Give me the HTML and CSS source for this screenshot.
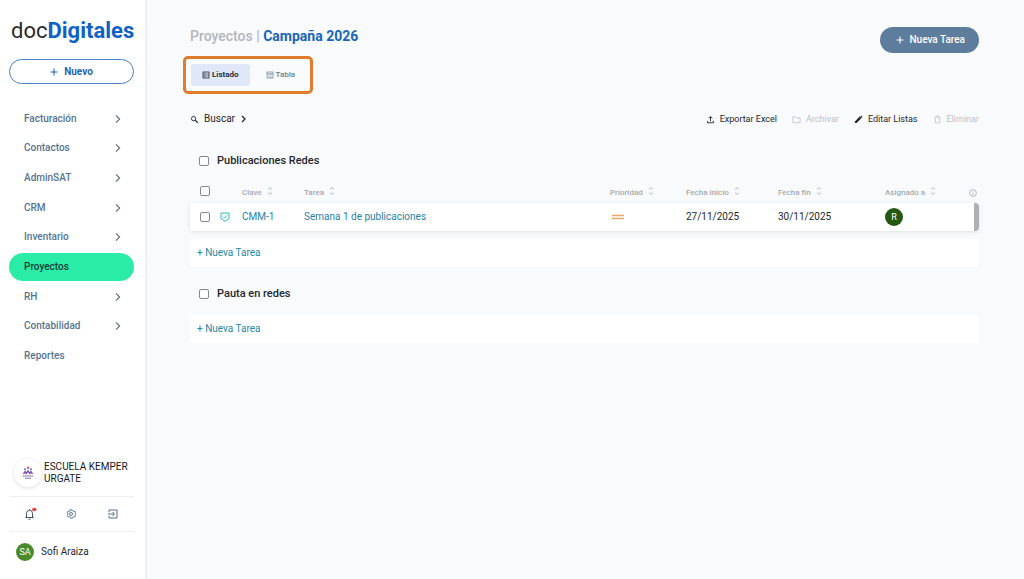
FILE: index.html
```html
<!DOCTYPE html>
<html lang="es">
<head>
<meta charset="utf-8">
<meta name="viewport" content="width=device-width, initial-scale=1">
<title>docDigitales – Proyectos</title>
<link rel="stylesheet" href="styles.css">
</head>
<body>
<svg class="defs" aria-hidden="true">
  <symbol id="chevron" viewBox="0 0 8 10"><path d="M2 1.4 5.6 5 2 8.6" fill="none" stroke="currentColor" stroke-width="1.1"/></symbol>
  <symbol id="plus" viewBox="0 0 8 8"><path d="M4 .5v7M.5 4h7" fill="none" stroke="currentColor" stroke-width="1.1"/></symbol>
  <symbol id="sort" viewBox="0 0 6 8"><path d="M1 2.300 3 .6l2 1.700M1 5.700l2 1.700 2-1.700" fill="none" stroke="currentColor" stroke-width=".8"/></symbol>
</svg>
<div class="app">
  <aside class="sidebar">
    <a class="logo" href="#"><span class="logo-doc">doc</span><span class="logo-main">Digitales</span></a>
    <button class="new-button" type="button"><svg class="icon-8"><use href="#plus"/></svg>Nuevo</button>
    <nav class="nav">
      <a class="nav-item" href="#">Facturación<svg class="nav-chevron"><use href="#chevron"/></svg></a>
      <a class="nav-item" href="#">Contactos<svg class="nav-chevron"><use href="#chevron"/></svg></a>
      <a class="nav-item" href="#">AdminSAT<svg class="nav-chevron"><use href="#chevron"/></svg></a>
      <a class="nav-item" href="#">CRM<svg class="nav-chevron"><use href="#chevron"/></svg></a>
      <a class="nav-item" href="#">Inventario<svg class="nav-chevron"><use href="#chevron"/></svg></a>
      <a class="nav-item nav-active" href="#" aria-current="page">Proyectos</a>
      <a class="nav-item" href="#">RH<svg class="nav-chevron"><use href="#chevron"/></svg></a>
      <a class="nav-item" href="#">Contabilidad<svg class="nav-chevron"><use href="#chevron"/></svg></a>
      <a class="nav-item" href="#">Reportes</a>
    </nav>
    <div class="account">
      <div class="company">
        <span class="company-logo">
          <svg width="12" height="14" viewBox="0 0 12 14" aria-hidden="true">
            <circle cx="6" cy="1.8" r="1.2" fill="#e0557c"/>
            <circle cx="3" cy="3.2" r="1" fill="#5b6fd0"/>
            <circle cx="9" cy="3.2" r="1" fill="#3f7fd0"/>
            <path d="M.8 7.800 3 4.500 4.600 6 6 3.400 7.400 6 9 4.500l2.200 3.300-2.200-.6-1.300 1.300L6 6.200 4.300 8.500 3 7.200z" fill="#6f55b4"/>
            <path d="M.8 7.800 3 5.500l-.4 2.600zM11.200 7.800 9 5.500l.4 2.600z" fill="#d0487c"/>
            <path d="M1 10h10M3 12.200h6" stroke="#6b5c92" stroke-width="1.100" stroke-dasharray="1.400 .3"/>
          </svg>
        </span>
        <span>ESCUELA KEMPER URGATE</span>
      </div>
      <div class="quick">
        <button class="icon-button" type="button" aria-label="Notificaciones">
          <svg width="16" height="14" viewBox="0 0 16 14"><path d="M4.500 10.400V6.300a3 3 0 0 1 6 0v4.100M3.300 10.500h8.400M6.500 12.200h2M7.500 3.100v-1" fill="none" stroke="#46566a"/><ellipse cx="12.300" cy="2.500" rx="2.200" ry="1.700" fill="#ea3b4c"/></svg>
        </button>
        <button class="icon-button" type="button" aria-label="Configuración">
          <svg width="10" height="10" viewBox="0 0 12 12" fill="none" stroke="#5c7898" stroke-width="1.200"><path d="m4.800 1 .3 1.200-1.200.7-1.300-.4-1.200 2 1 .9v1.200l-1 .9 1.200 2 1.300-.4 1.200.7.3 1.200h2.400l.3-1.200 1.200-.7 1.300.4 1.200-2-1-.9V5.400l1-.9-1.200-2-1.300.4-1.200-.7L7.200 1z"/><circle cx="6" cy="6" r="1.800"/></svg>
        </button>
        <button class="icon-button" type="button" aria-label="Salir">
          <svg width="10" height="10" viewBox="0 0 10 10" fill="none" stroke="#566f8d"><path d="M1 3.200V1h8v8H1V6.800M0 5h6.200M4.500 3l2 2-2 2"/></svg>
        </button>
      </div>
      <div class="user"><span class="avatar avatar-user">SA</span>Sofi Araiza</div>
    </div>
  </aside>

  <main class="main">
    <header class="page-header">
      <div>
        <h1 class="title"><span class="title-parent">Proyectos |</span> Campaña 2026</h1>
        <div class="tabs" role="tablist">
          <button class="tab tab-active" type="button" role="tab" aria-selected="true">
            <svg width="8" height="8" viewBox="0 0 8 8" fill="none" stroke="currentColor" stroke-width=".8"><rect x="1" y="1" width="6" height="6"/><path d="M1 3h6M1 5h6" stroke-width=".6"/><path d="M2.800 1v6" stroke-width=".4"/></svg>Listado
          </button>
          <button class="tab" type="button" role="tab" aria-selected="false">
            <svg width="8" height="8" viewBox="0 0 8 8" fill="none" stroke="currentColor" stroke-width=".7"><rect x="1" y="1" width="6" height="6"/><path d="M1 2.800h6"/><path d="M3 2.800V7M5 2.800V7" stroke-width=".5"/></svg>Tabla
          </button>
        </div>
      </div>
      <button class="primary-button" type="button"><svg class="icon-8"><use href="#plus"/></svg>Nueva Tarea</button>
    </header>

    <div class="toolbar">
      <button class="tool tool-search" type="button">
        <svg class="tool-icon" viewBox="0 0 10 10" fill="none" stroke="currentColor"><circle cx="4" cy="4" r="2.400"/><path d="m5.800 5.800 3 3" stroke-width="1.300"/></svg>Buscar<svg class="search-chevron" viewBox="0 0 8 10"><path d="m2 2 3 3-3 3" fill="none" stroke="currentColor" stroke-width="1.300"/></svg>
      </button>
      <div class="actions">
        <button class="tool" type="button"><svg class="tool-icon" viewBox="0 0 10 10" fill="none" stroke="currentColor"><path d="M5 7V2M3 3.800l2-2 2 2M1.600 6.600v2h6.800v-2"/></svg>Exportar Excel</button>
        <button class="tool" type="button" disabled><svg class="tool-icon" viewBox="0 0 10 10" fill="none" stroke="currentColor" stroke-width=".9"><path d="M1 2h3l1 1.200h4v5.300H1z"/></svg>Archivar</button>
        <button class="tool" type="button"><svg class="tool-icon" viewBox="0 0 10 10" fill="currentColor"><path d="M1 9V7.100L6.300 1.800l1.900 1.900L2.900 9zM6.800 1.300l.7-.6q.3-.2.6 0L9.300 1.900q.2.300 0 .6l-.6.700z"/></svg>Editar Listas</button>
        <button class="tool" type="button" disabled><svg class="tool-icon" viewBox="0 0 10 10" fill="none" stroke="currentColor" stroke-width=".9"><path d="M1.800 2.300h6.400M3.800 2V1.200h2.400V2M2.600 2.500v6.200h4.800V2.500"/></svg>Eliminar</button>
      </div>
    </div>

    <section class="group">
      <label class="group-title"><input class="check" type="checkbox">Publicaciones Redes</label>
      <table class="tasks">
        <colgroup><col class="col-check"><col class="col-type"><col class="col-key"><col class="col-task"><col class="col-priority"><col class="col-start"><col class="col-end"><col class="col-owner"><col class="col-info"></colgroup>
        <thead>
          <tr>
            <th class="cell-check"><input class="check" type="checkbox" aria-label="Seleccionar todas"></th>
            <th></th>
            <th>Clave<svg class="sort"><use href="#sort"/></svg></th>
            <th>Tarea<svg class="sort"><use href="#sort"/></svg></th>
            <th>Prioridad<svg class="sort"><use href="#sort"/></svg></th>
            <th>Fecha inicio<svg class="sort"><use href="#sort"/></svg></th>
            <th>Fecha fin<svg class="sort"><use href="#sort"/></svg></th>
            <th>Asignado a<svg class="sort"><use href="#sort"/></svg></th>
            <th><svg class="info" viewBox="0 0 8 8" fill="none" stroke="currentColor" stroke-width=".8"><circle cx="4" cy="4" r="3.400"/><path d="M4 3.600V6M4 2v.8"/></svg></th>
          </tr>
        </thead>
        <tbody>
          <tr>
            <td class="cell-check"><input class="check" type="checkbox" aria-label="Seleccionar CMM-1"></td>
            <td><svg class="type" viewBox="0 0 10 10" fill="none" stroke="#2fb9b3"><path d="M1 1h8v5.500L5 9.400 1 6.500z"/><path d="m3 4.600 1.500 1.500L7.200 3.200"/></svg></td>
            <td><a class="link" href="#">CMM-1</a></td>
            <td><a class="link" href="#">Semana 1 de publicaciones</a></td>
            <td><svg class="priority" viewBox="0 0 12 6" role="img" aria-label="Media"><path d="M0 1.500h12M0 4.500h12" stroke="#eda765" stroke-width="1.300"/></svg></td>
            <td>27/11/2025</td>
            <td>30/11/2025</td>
            <td><span class="avatar avatar-owner">R</span></td>
            <td class="cell-scroll"></td>
          </tr>
        </tbody>
      </table>
      <button class="add-row add-after-table" type="button">+ Nueva Tarea</button>
    </section>

    <section class="group group-next">
      <label class="group-title"><input class="check" type="checkbox">Pauta en redes</label>
      <button class="add-row" type="button">+ Nueva Tarea</button>
    </section>
  </main>
</div>
</body>
</html>
```
FILE: styles.css
```css
* { box-sizing: border-box; }

body {
  margin: 0;
  background: #f8fafc;
  color: #24282d;
  font: 10px/12px Roboto, "Liberation Sans", sans-serif;
}

button {
  margin: 0;
  padding: 0;
  border: 0;
  background: none;
  color: inherit;
  font: inherit;
  cursor: pointer;
}

a { color: inherit; text-decoration: none; }
svg { display: block; flex: none; }
.defs { position: absolute; width: 0; height: 0; }
.icon-8 { width: 8px; height: 8px; }

.app {
  display: grid;
  grid-template-columns: 147px 1fr;
  min-height: 100vh;
}

/* Sidebar */
.sidebar {
  display: flex;
  flex-direction: column;
  padding: 18px 11px 18px 9px;
  border-right: 2px solid #edf0f2;
  background: #fff;
}

.logo {
  padding-left: 2px;
  font-size: 22px;
  line-height: 26px;
  white-space: nowrap;
}
.logo-doc { color: #2b2b2f; font-weight: 400; }
.logo-main { color: #0f62c4; font-weight: 700; }

.new-button {
  display: flex;
  align-items: center;
  justify-content: center;
  gap: 6px;
  height: 25px;
  margin-top: 15px;
  border: 1px solid #4a80c4;
  border-radius: 13px;
  color: #1f66b0;
  font-weight: 700;
}

.nav {
  display: grid;
  grid-auto-rows: 1fr;
  align-items: center;
  height: 267px;
  margin-top: 20px;
}
.nav-item {
  display: flex;
  align-items: center;
  justify-content: space-between;
  height: 28px;
  padding: 0 12px 0 15px;
  border-radius: 14px;
  color: #587391;
  font-weight: 500;
}
.nav-active { background: #2aeca6; color: #123c3a; }
.nav-chevron { width: 8px; height: 10px; color: #5c6773; }

.account { margin-top: auto; }
.company {
  display: flex;
  align-items: center;
  gap: 2px;
  padding: 0 4px 9px 5px;
  color: #16181b;
}
.company-logo {
  display: grid;
  place-items: center;
  flex: none;
  width: 28px;
  height: 28px;
  border-radius: 50%;
  box-shadow: 0 1px 4px #0002;
}
.quick {
  display: grid;
  grid-template-columns: repeat(3, 1fr);
  justify-items: center;
  border-top: 1px solid #eceef0;
  border-bottom: 1px solid #eceef0;
}
.icon-button {
  display: grid;
  place-items: center;
  width: 20px;
  height: 34px;
}
.user {
  display: flex;
  align-items: center;
  gap: 7px;
  padding: 11px 0 0 7px;
}

.avatar {
  display: grid;
  place-items: center;
  width: 18px;
  height: 18px;
  border-radius: 50%;
  color: #fff;
  font-size: 9px;
}
.avatar-user { background: #4a8a2c; }
.avatar-owner { background: #245716; }

/* Main area */
.main { min-width: 0; padding: 27px 45px 27px 43px; }

.page-header {
  display: flex;
  align-items: flex-start;
  justify-content: space-between;
}
.title {
  margin: 0;
  color: #1966b5;
  font-size: 14px;
  font-weight: 700;
  line-height: 18px;
}
.title-parent { color: #b3b6bc; font-weight: 500; }

.tabs {
  display: inline-flex;
  gap: 6px;
  margin: 11px 0 0 -7px;
  padding: 5px;
  border: 3px solid #e07d2d;
  border-radius: 5px;
}
.tab {
  display: flex;
  align-items: center;
  justify-content: center;
  gap: 2px;
  height: 22px;
  padding: 0 10px;
  border-radius: 3px;
  color: #6d7f8c;
  font-size: 8px;
  font-weight: 500;
}
.tab-active { padding: 0 11px; background: #dfe7f8; color: #24303c; font-weight: 700; }

.primary-button {
  display: flex;
  align-items: center;
  gap: 5px;
  height: 26px;
  padding: 0 14px 0 16px;
  border-radius: 13px;
  background: #5e7c9b;
  color: #fff;
  font-weight: 500;
}

.toolbar {
  display: flex;
  justify-content: space-between;
  margin-top: 17px;
}
.actions { display: flex; gap: 15px; }
.tool {
  display: flex;
  align-items: center;
  gap: 5px;
  height: 16px;
  font-size: 9px;
}
.tool-search { font-size: 10px; }
.tool:disabled { color: #bec1c4; cursor: default; }
.tool-icon { width: 9px; height: 9px; }
.search-chevron { width: 8px; height: 10px; }

/* Task groups */
.group { margin-top: 26px; }
.group-next { margin-top: 19px; }
.group-title {
  display: flex;
  align-items: center;
  gap: 8px;
  margin-bottom: 13px;
  padding-left: 9px;
  font-size: 11px;
  font-weight: 500;
  line-height: 16px;
}
.check {
  appearance: none;
  display: block;
  flex: none;
  width: 10px;
  height: 10px;
  margin: 0;
  border: 1px solid #85898e;
  border-radius: 2px;
  background: #fff;
}
.check:checked { background: #1966b5; }

.tasks {
  width: 100%;
  border-spacing: 0;
  table-layout: fixed;
}
.col-check { width: 30px; }
.col-type { width: 22px; }
.col-key { width: 62px; }
.col-priority { width: 76px; }
.col-start { width: 92px; }
.col-end { width: 107px; }
.col-owner { width: 84px; }
.col-info { width: 10px; }
.tasks th,
.tasks td { padding: 0; text-align: left; white-space: nowrap; }
.tasks th {
  height: 21px;
  padding-top: 1px;
  color: #a5a9ae;
  font-size: 8px;
  font-weight: 500;
}
.tasks thead .cell-check { padding-top: 0; padding-bottom: 3px; }
.tasks td { height: 28px; background: #fff; }
.tasks tbody tr { box-shadow: 0 1px 4px #0000001a; border-radius: 3px; }
.tasks .cell-check { padding-left: 10px; }
.sort { display: inline-block; width: 6px; height: 8px; margin-left: 5px; }
.info { width: 8px; height: 8px; }
.type { width: 10px; height: 10px; }
.priority { width: 12px; height: 6px; margin-left: 2px; }
.tasks .cell-scroll { border-right: 5px solid #aeb0b3; border-radius: 0 4px 4px 0; }
.link { color: #2582a8; }

.add-row {
  display: block;
  width: 100%;
  height: 28px;
  padding-left: 7px;
  border-radius: 3px;
  background: #fff;
  color: #2589a5;
  text-align: left;
}
.add-after-table { margin-top: 8px; }
```
